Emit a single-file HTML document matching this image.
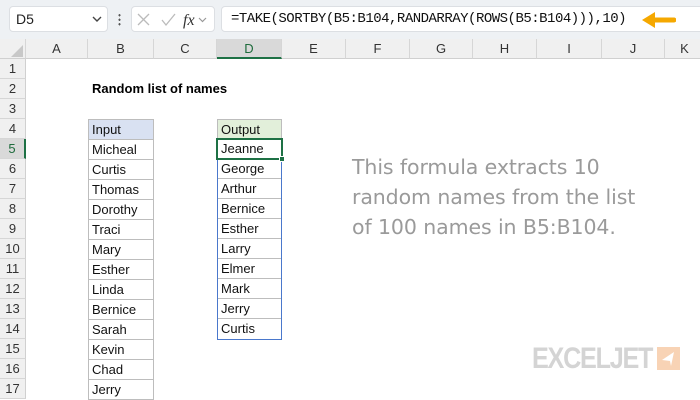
<!DOCTYPE html>
<html><head><style>
*{margin:0;padding:0;box-sizing:border-box}
body{width:700px;height:400px;overflow:hidden;background:#fff;font-family:"Liberation Sans",sans-serif;position:relative}
.a{position:absolute}
.tb{left:0;top:0;width:700px;height:39px;background:#eef1f4}
.box{background:#fff;border:1px solid #dcdfe3;border-radius:4px}
.ch{top:39px;height:20px;background:#f0f0f0;border-right:1px solid #d6d6d6;border-bottom:1px solid #d0d0d0;font-size:13px;color:#333;text-align:center;line-height:19px}
.rh{left:0;width:26px;height:20px;background:#f0f0f0;border-bottom:1px solid #d6d6d6;border-right:1px solid #d0d0d0;font-size:13px;color:#333;text-align:center;line-height:20px}
.c{height:21px;border:1px solid #bdbdbd;font-size:13px;line-height:19px;padding-left:3px;color:#111}
.d{height:20px;border-bottom:1px solid #bdbdbd;font-size:13px;line-height:20px;padding-left:3px;color:#111}
.note{left:352px;font-family:"Comic Sans MS","DejaVu Sans",sans-serif;font-size:20.5px;color:#9a9a9a;letter-spacing:-0.1px}
</style></head><body>
<div class="a tb"></div>
<div class="a box" style="left:9px;top:6px;width:99px;height:26px;font-size:14px;line-height:24px;padding-left:6px;color:#222">D5</div>
<svg class="a" style="left:92px;top:15px" width="10" height="8"><path d="M1 2l4 4 4-4" stroke="#444" stroke-width="1.4" fill="none"/></svg>
<div class="a" style="left:118px;top:13px;width:3px;height:13px;background:radial-gradient(circle,#555 1px,transparent 1.2px) 0 0/3px 4.5px"></div>
<div class="a box" style="left:131px;top:6px;width:84px;height:26px"></div>
<svg class="a" style="left:136px;top:11px" width="75" height="18"><path d="M2 3l11 11M13 3L2 14" stroke="#bbb" stroke-width="1.3"/><path d="M26 9l4 5 9-11" stroke="#bbb" stroke-width="1.3" fill="none"/><text x="47" y="14" font-family="Liberation Serif" font-style="italic" font-size="16" fill="#333">fx</text><path d="M63 7l3.5 3.5L70 7" stroke="#999" stroke-width="1.2" fill="none"/></svg>
<div class="a box" style="left:221px;top:6px;width:485px;height:26px;font-family:'Liberation Mono',monospace;font-size:14px;line-height:24px;padding-left:9px;color:#111;letter-spacing:-0.5px">=TAKE(SORTBY(B5:B104,RANDARRAY(ROWS(B5:B104))),10)</div>
<svg class="a" style="left:640px;top:11px" width="36" height="18"><path d="M34 9H14" stroke="#f5a800" stroke-width="5" stroke-linecap="round"/><path d="M2 9l13-8v16z" fill="#f5a800"/></svg>
<div class="a ch" style="left:0;width:26px"></div>
<svg class="a" style="left:10px;top:44px" width="14" height="14"><path d="M13 1V13H1z" fill="#c8c8c8"/></svg>
<div class="a ch" style="left:26px;width:62px">A</div>
<div class="a ch" style="left:88px;width:66px">B</div>
<div class="a ch" style="left:154px;width:63px">C</div>
<div class="a ch" style="left:217px;width:65px;background:#d9d9d9;border-bottom:2px solid #1e7145;color:#1e6b3c">D</div>
<div class="a ch" style="left:282px;width:64px">E</div>
<div class="a ch" style="left:346px;width:64px">F</div>
<div class="a ch" style="left:410px;width:63px">G</div>
<div class="a ch" style="left:473px;width:64px">H</div>
<div class="a ch" style="left:537px;width:65px">I</div>
<div class="a ch" style="left:602px;width:63px">J</div>
<div class="a ch" style="left:665px;width:40px">K</div>
<div class="a rh" style="top:59px">1</div>
<div class="a rh" style="top:79px">2</div>
<div class="a rh" style="top:99px">3</div>
<div class="a rh" style="top:119px">4</div>
<div class="a rh" style="top:139px;background:#d9d9d9;border-right:2px solid #1e7145;color:#1e6b3c">5</div>
<div class="a rh" style="top:159px">6</div>
<div class="a rh" style="top:179px">7</div>
<div class="a rh" style="top:199px">8</div>
<div class="a rh" style="top:219px">9</div>
<div class="a rh" style="top:239px">10</div>
<div class="a rh" style="top:259px">11</div>
<div class="a rh" style="top:279px">12</div>
<div class="a rh" style="top:299px">13</div>
<div class="a rh" style="top:319px">14</div>
<div class="a rh" style="top:339px">15</div>
<div class="a rh" style="top:359px">16</div>
<div class="a rh" style="top:379px">17</div>
<div class="a" style="left:92px;top:81px;font-size:13px;font-weight:bold;line-height:16px">Random list of names</div>
<div class="a c" style="left:88px;top:119px;width:66px;background:#d9e1f2">Input</div>
<div class="a c" style="left:88px;top:139px;width:66px">Micheal</div>
<div class="a c" style="left:88px;top:159px;width:66px">Curtis</div>
<div class="a c" style="left:88px;top:179px;width:66px">Thomas</div>
<div class="a c" style="left:88px;top:199px;width:66px">Dorothy</div>
<div class="a c" style="left:88px;top:219px;width:66px">Traci</div>
<div class="a c" style="left:88px;top:239px;width:66px">Mary</div>
<div class="a c" style="left:88px;top:259px;width:66px">Esther</div>
<div class="a c" style="left:88px;top:279px;width:66px">Linda</div>
<div class="a c" style="left:88px;top:299px;width:66px">Bernice</div>
<div class="a c" style="left:88px;top:319px;width:66px">Sarah</div>
<div class="a c" style="left:88px;top:339px;width:66px">Kevin</div>
<div class="a c" style="left:88px;top:359px;width:66px">Chad</div>
<div class="a c" style="left:88px;top:379px;width:66px">Jerry</div>
<div class="a c" style="left:217px;top:119px;width:65px;background:#e2efda">Output</div>
<div class="a" style="left:217px;top:139px;width:65px;height:201px;border:1px solid #4a78cc;border-top:none">
<div class="d">Jeanne</div><div class="d">George</div><div class="d">Arthur</div><div class="d">Bernice</div><div class="d">Esther</div><div class="d">Larry</div><div class="d">Elmer</div><div class="d">Mark</div><div class="d">Jerry</div><div class="d" style="border-bottom:none">Curtis</div>
</div>
<div class="a" style="left:216px;top:138px;width:67px;height:22px;border:2px solid #1e7145"></div>
<div class="a" style="left:279px;top:156px;width:6px;height:6px;background:#1e7145;border:1px solid #fff"></div>
<div class="a note" style="top:155px">This formula extracts 10</div>
<div class="a note" style="top:185px">random names from the list</div>
<div class="a note" style="top:215px">of 100 names in B5:B104.</div>
<div class="a" style="left:532px;top:342px;font-size:30px;font-weight:bold;color:#d4d4d4;letter-spacing:-1.5px;transform:scaleX(0.84);transform-origin:left">EXCELJET</div>
<div class="a" style="left:657px;top:347px;width:23px;height:23px;background:#f8d3b5"></div>
<svg class="a" style="left:657px;top:347px" width="23" height="23"><path d="M17 5L5 13l8 1 1 5z" fill="#fff"/></svg>
</body></html>
